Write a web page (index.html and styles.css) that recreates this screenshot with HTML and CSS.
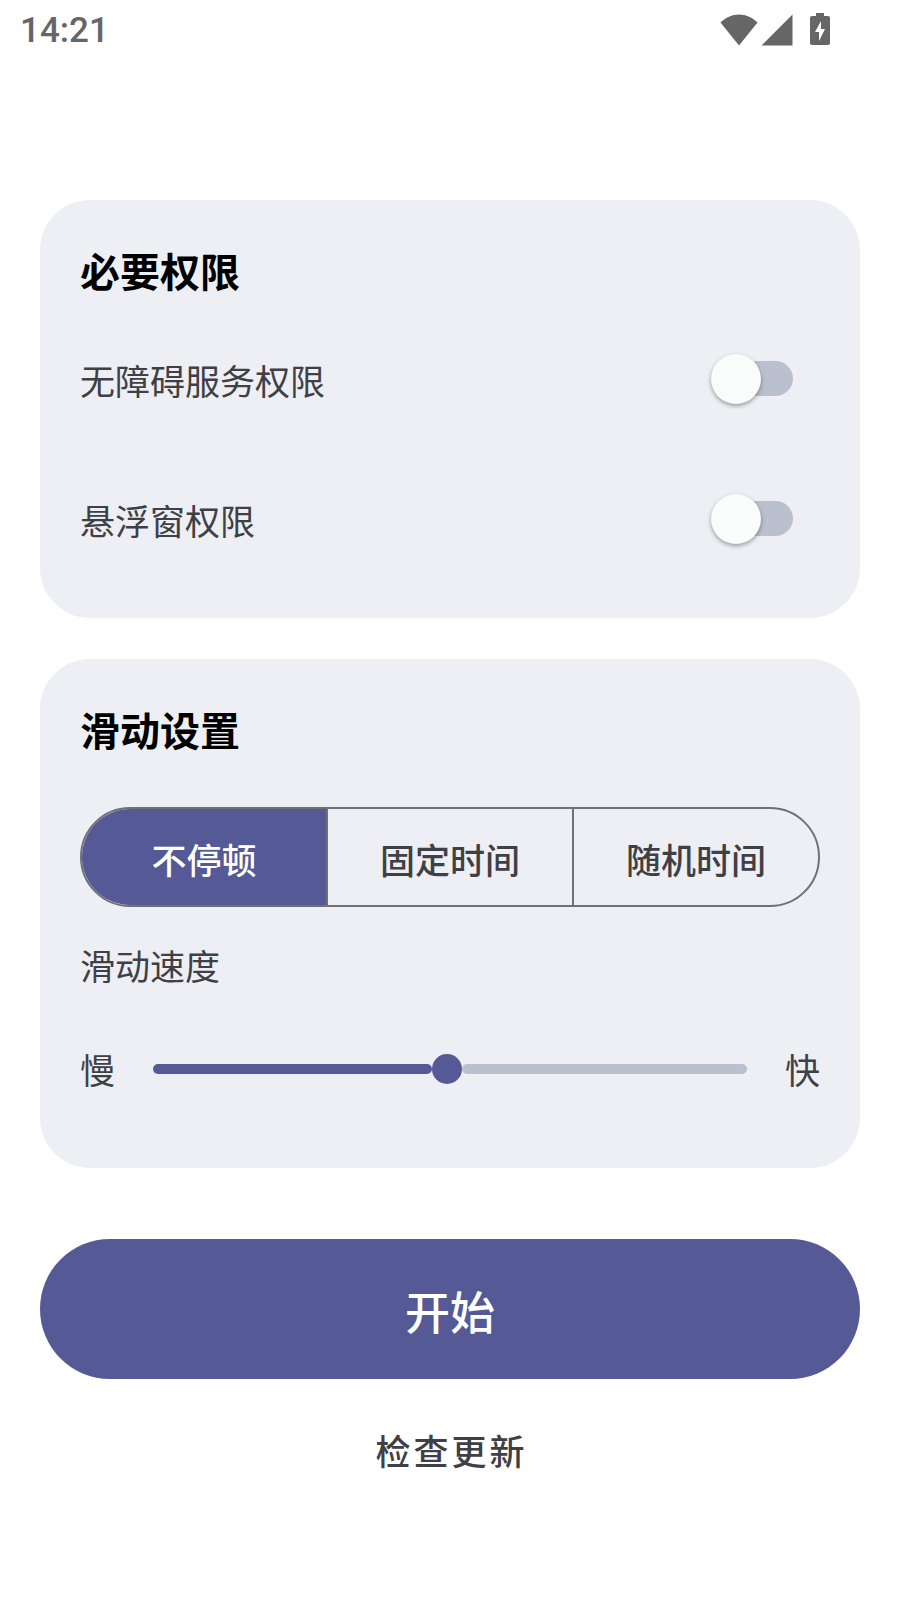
FILE: index.html
```html
<!DOCTYPE html>
<html lang="zh-CN">
<head>
    <meta charset="UTF-8">
    <meta name="viewport" content="width=device-width, initial-scale=1.0">
    <title>滑动设置</title>
    <link rel="stylesheet" href="styles.css">
</head>
<body>

<header class="status-bar">
    <span class="time">14:21</span>
    <div class="status-icons">
        <svg class="wifi" width="38" height="34" viewBox="0 0 38 34" aria-hidden="true">
            <path d="M0.5 9.5C5.500 4.500 12 1.500 19 1.500s13.500 3 18.500 8L19 32.500z"/>
        </svg>
        <svg class="signal" width="32" height="34" viewBox="0 0 32 34" aria-hidden="true">
            <path d="M0.500 32.500L31.500 1.500v31z"/>
        </svg>
        <svg class="battery" width="20" height="34" viewBox="0 0 20 34" aria-hidden="true">
            <path fill-rule="evenodd" d="M6 0h8v3h4a2 2 0 0 1 2 2v25a2 2 0 0 1-2 2H2a2 2 0 0 1-2-2V5a2 2 0 0 1 2-2h4zM11 8L5 19h4v9L15 16h-4z"/>
        </svg>
    </div>
</header>

<main class="content">
    <section class="card permissions">
        <h2 class="card-title">必要权限</h2>
        <div class="row">
            <label for="accessibility">无障碍服务权限</label>
            <input type="checkbox" class="switch" id="accessibility">
        </div>
        <div class="row">
            <label for="overlay">悬浮窗权限</label>
            <input type="checkbox" class="switch" id="overlay">
        </div>
    </section>

    <section class="card settings">
        <h2 class="card-title">滑动设置</h2>
        <div class="segments">
            <button type="button" class="segment active">不停顿</button>
            <button type="button" class="segment">固定时间</button>
            <button type="button" class="segment">随机时间</button>
        </div>
        <label class="speed-label" for="speed">滑动速度</label>
        <div class="speed">
            <span>慢</span>
            <div class="slider" id="slider" style="--value: 0.495">
                <span class="track filled"></span>
                <span class="track"></span>
                <input type="range" id="speed" min="0" max="1000" value="495">
            </div>
            <span>快</span>
        </div>
    </section>

    <button type="button" class="start">开始</button>
    <button type="button" class="update">检查更新</button>
</main>

<script>
    const segments = document.querySelectorAll('.segment');
    const speed = document.getElementById('speed');

    segments.forEach(function (segment) {
        segment.addEventListener('click', function () {
            segments.forEach(s => s.classList.remove('active'));
            segment.classList.add('active');
        });
    });

    speed.addEventListener('input', function () {
        document.getElementById('slider').style.setProperty('--value', speed.value / 1000);
    });
</script>

</body>
</html>
```
FILE: styles.css
```css
* {
    box-sizing: border-box;
}
body {
    margin: 0;
    background-color: #fff;
    color: #3f4045;
    font-family: "Noto Sans CJK SC", sans-serif;
    font-size: 35px;
    line-height: 60px;
}
button {
    padding: 0;
    border: none;
    background: none;
    color: inherit;
    font: inherit;
    font-weight: 500;
    cursor: pointer;
}

/* status bar */
.status-bar {
    display: flex;
    justify-content: space-between;
    align-items: center;
    height: 60px;
    padding: 0 70px 0 20px;
    color: #666;
}
.time {
    padding-top: 2px;
    font-family: Roboto, sans-serif;
    font-weight: 500;
}
.status-icons {
    display: flex;
    gap: 3px;
}
.status-icons svg {
    fill: #666;
}
.signal {
    margin-right: 14px;
}

/* cards */
.content {
    display: flex;
    flex-direction: column;
    padding: 140px 40px 40px;
}
.card {
    padding: 40px;
    border-radius: 50px;
    background-color: #edeff4;
}
.permissions {
    padding-bottom: 30px;
    margin-bottom: 41px;
}
.settings {
    padding-bottom: 49px;
}
.card-title {
    margin: 0 0 8px;
    color: #000;
    font-size: 40px;
    font-weight: 700;
}
.settings .card-title {
    margin-bottom: 48px;
}
.row {
    display: flex;
    justify-content: space-between;
    align-items: center;
    height: 140px;
}
.row label {
    padding-top: 3px;
}

/* switch */
.switch {
    appearance: none;
    position: relative;
    width: 75px;
    height: 35px;
    margin: 0 27px 0 0;
    border-radius: 18px;
    background-color: #bbc0ce;
    cursor: pointer;
}
.switch::before {
    content: "";
    position: absolute;
    top: -7px;
    left: -7px;
    width: 50px;
    height: 50px;
    border-radius: 50%;
    background-color: #fafbfb;
    box-shadow: 0 2px 4px rgba(0, 0, 0, 0.35);
}
.switch:checked {
    background-color: #a4a6cc;
}
.switch:checked::before {
    left: 32px;
    background-color: #555995;
}

/* segmented buttons */
.segments {
    display: flex;
    height: 100px;
    margin-bottom: 28px;
    border: 2px solid #717078;
    border-radius: 50px;
    overflow: hidden;
}
.segment {
    flex: 1;
    padding-top: 3px;
}
.segment + .segment {
    border-left: 2px solid #717078;
}
.segment.active {
    background-color: #555995;
    color: #fff;
}

/* speed slider */
.speed-label {
    display: block;
}
.speed {
    display: flex;
    align-items: center;
    gap: 38px;
    height: 100px;
    margin-top: 24px;
}
.slider {
    position: relative;
    display: flex;
    flex: 1;
    gap: 30px;
}
.track {
    flex: 1;
    height: 10px;
    border-radius: 5px;
    background-color: #bbc0ce;
}
.track.filled {
    flex: none;
    width: calc((100% - 30px) * var(--value));
    background-color: #555995;
}
.slider input {
    appearance: none;
    position: absolute;
    top: -10px;
    left: 0;
    width: 100%;
    height: 30px;
    margin: 0;
    background: none;
}
.slider input::-webkit-slider-thumb {
    appearance: none;
    width: 30px;
    height: 30px;
    border-radius: 50%;
    background-color: #555995;
}

/* actions */
.start {
    height: 140px;
    margin-top: 71px;
    padding-top: 3px;
    border-radius: 70px;
    background-color: #555995;
    color: #fff;
    font-size: 45px;
}
.update {
    align-self: center;
    height: 70px;
    margin-top: 36px;
    padding-left: 3px;
    letter-spacing: 3px;
}
```
